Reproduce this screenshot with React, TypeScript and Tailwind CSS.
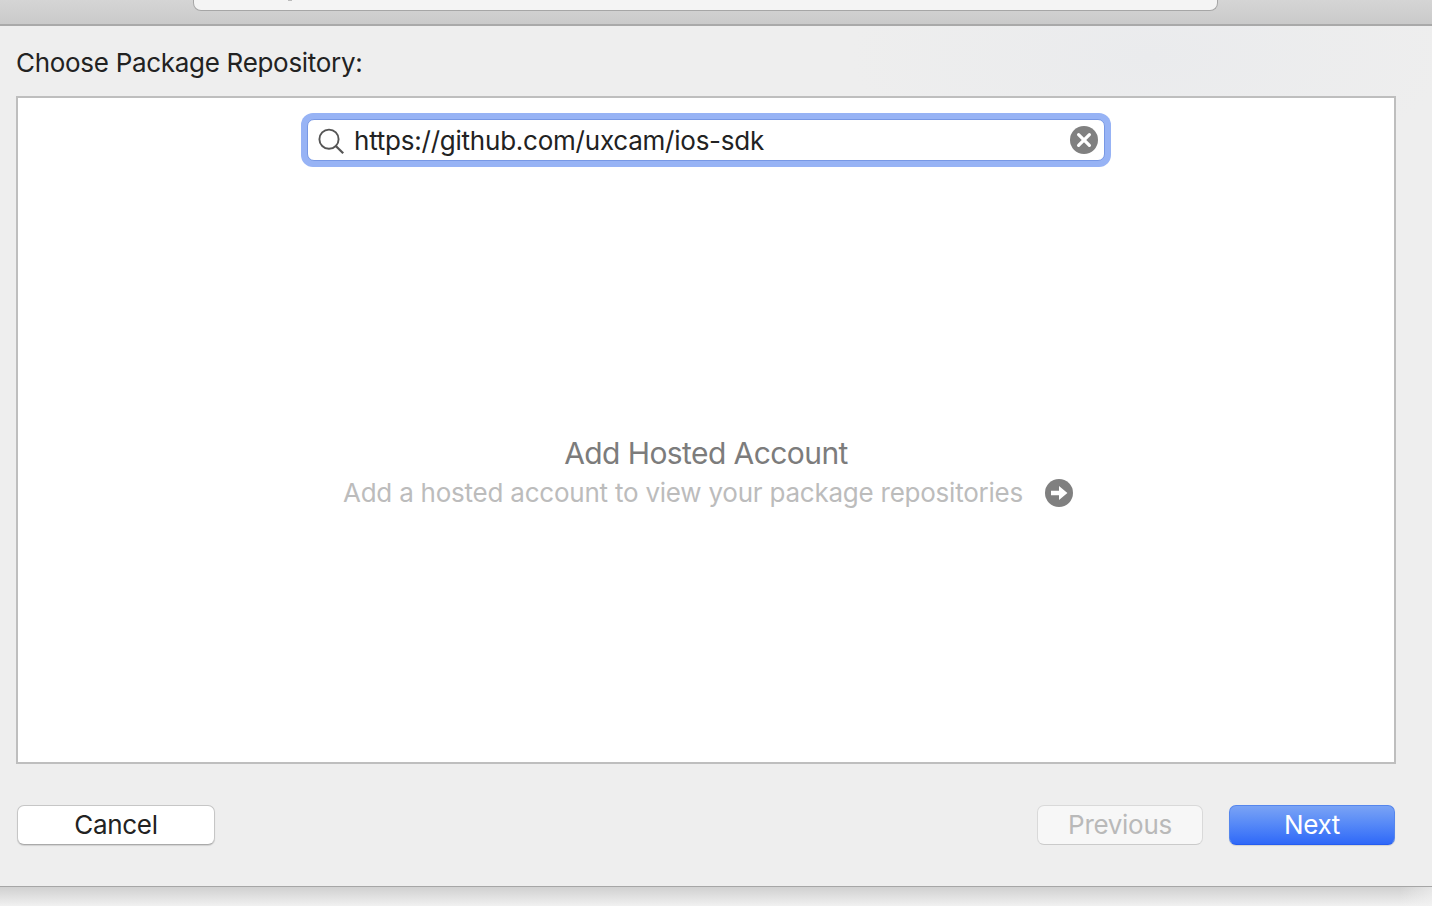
import React from "react";

function SearchIcon() {
  return (
    <svg className="ml-[10px] mt-[3px] h-[28px] w-[28px] shrink-0" viewBox="0 0 28 28" fill="none" stroke="#555" strokeWidth="1.9">
      <circle cx="11" cy="11.2" r="9.6" />
      <path d="M17.8 18L25.2 25.2" strokeWidth="2.3" />
    </svg>
  );
}

function ClearIcon() {
  return (
    <svg className="h-7 w-7 shrink-0" viewBox="0 0 28 28">
      <circle cx="14" cy="14" r="14" fill="#808080" />
      <path d="M8.6 8.6L19.4 19.4M19.4 8.6L8.6 19.4" stroke="#fff" strokeWidth="3.2" strokeLinecap="round" />
    </svg>
  );
}

function ArrowIcon() {
  return (
    <svg className="h-7 w-7 shrink-0" viewBox="0 0 28 28">
      <circle cx="14" cy="14" r="14" fill="#808080" />
      <path d="M6 11.8H14V7L22.4 14L14 21V16.2H6Z" fill="#fff" />
    </svg>
  );
}

export default function App() {
  return (
    <div className="flex h-[906px] w-[1432px] flex-col overflow-hidden bg-[#f5f5f5] font-['Inter','Liberation_Sans',sans-serif] font-normal text-[#222222]">
      <div className="h-[26px] shrink-0 border-b-2 border-[#a9a9a9] bg-linear-to-b from-[#d5d5d5] to-[#cacaca] pl-[193px]">
        <div className="flex h-[11px] w-[1025px] rounded-b-[8px] border border-t-0 border-[#a6a6a6] bg-[#f4f4f4] pl-[94px]">
          <div className="h-px w-1 bg-[#bbb]" />
        </div>
      </div>
      <main className="flex h-[861px] shrink-0 flex-col border-b border-[#a6a6a6] bg-[#eeeeee] bg-[radial-gradient(ellipse_300px_120px_at_1150px_30px,#eaebed,#eeeeee)] pl-4 pr-9">
        <h1 className="h-[70px] pt-[20px] text-[26px] leading-[34px] tracking-[-0.3px]">
          <span>Choose Package Repository:</span>
        </h1>
        <section className="flex h-[668px] shrink-0 flex-col items-center border-2 border-[#bebebe] bg-white pt-[15px]">
          <div className="flex h-[54px] w-[810px] shrink-0 rounded-[12px] bg-[#97b3f5] p-[6px]">
            <div className="flex w-full items-center rounded-[7px] border border-[#7898e4] bg-white pr-[6px]">
              <SearchIcon />
              <span className="ml-[8px] flex-1 pt-[2px] text-[26px] leading-[34px] tracking-[-0.23px]">https://github.com/uxcam/ios-sdk</span>
              <ClearIcon />
            </div>
          </div>
          <h2 className="mt-[268px] text-[30px] leading-[36px] tracking-[-0.58px] text-[#7c7c7c]">
            <span>Add Hosted Account</span>
          </h2>
          <div className="mt-[5px] flex items-center gap-[22px] pl-[4px] text-[26px] leading-[34px] tracking-[-0.23px] text-[#bcbcbc]">
            <span>Add a hosted account to view your package repositories</span>
            <ArrowIcon />
          </div>
        </section>
        <footer className="flex pt-[41px] text-[26px] leading-[34px] tracking-[-0.3px]">
          <button className="ml-px flex h-[40px] w-[198px] items-center justify-center rounded-[7px] border border-[#c6c6c6] border-b-[#aaa] bg-white shadow-[0_1px_1px_rgba(0,0,0,0.12)]">
            <span>Cancel</span>
          </button>
          <button className="ml-auto flex h-[40px] w-[166px] items-center justify-center rounded-[7px] border border-[#d9d9d9] border-b-[#cacaca] bg-[#f7f7f7] text-[#b9b9b9]">
            <span>Previous</span>
          </button>
          <button className="ml-[26px] mr-px flex h-[40px] w-[166px] items-center justify-center rounded-[7px] border border-[#5586ed] border-b-[#245cf0] bg-linear-to-b from-[#7aa3f5] to-[#2f68f8] text-white shadow-[0_1px_1px_rgba(0,0,0,0.12)]">
            <span>Next</span>
          </button>
        </footer>
      </main>
      <div className="flex flex-1 bg-linear-to-b from-[#d0d0d0] to-[#f1f1f1]">
        <div className="ml-auto w-[32px] bg-linear-to-r from-[#f3f3f300] to-[#f3f3f399]" />
      </div>
    </div>
  );
}
